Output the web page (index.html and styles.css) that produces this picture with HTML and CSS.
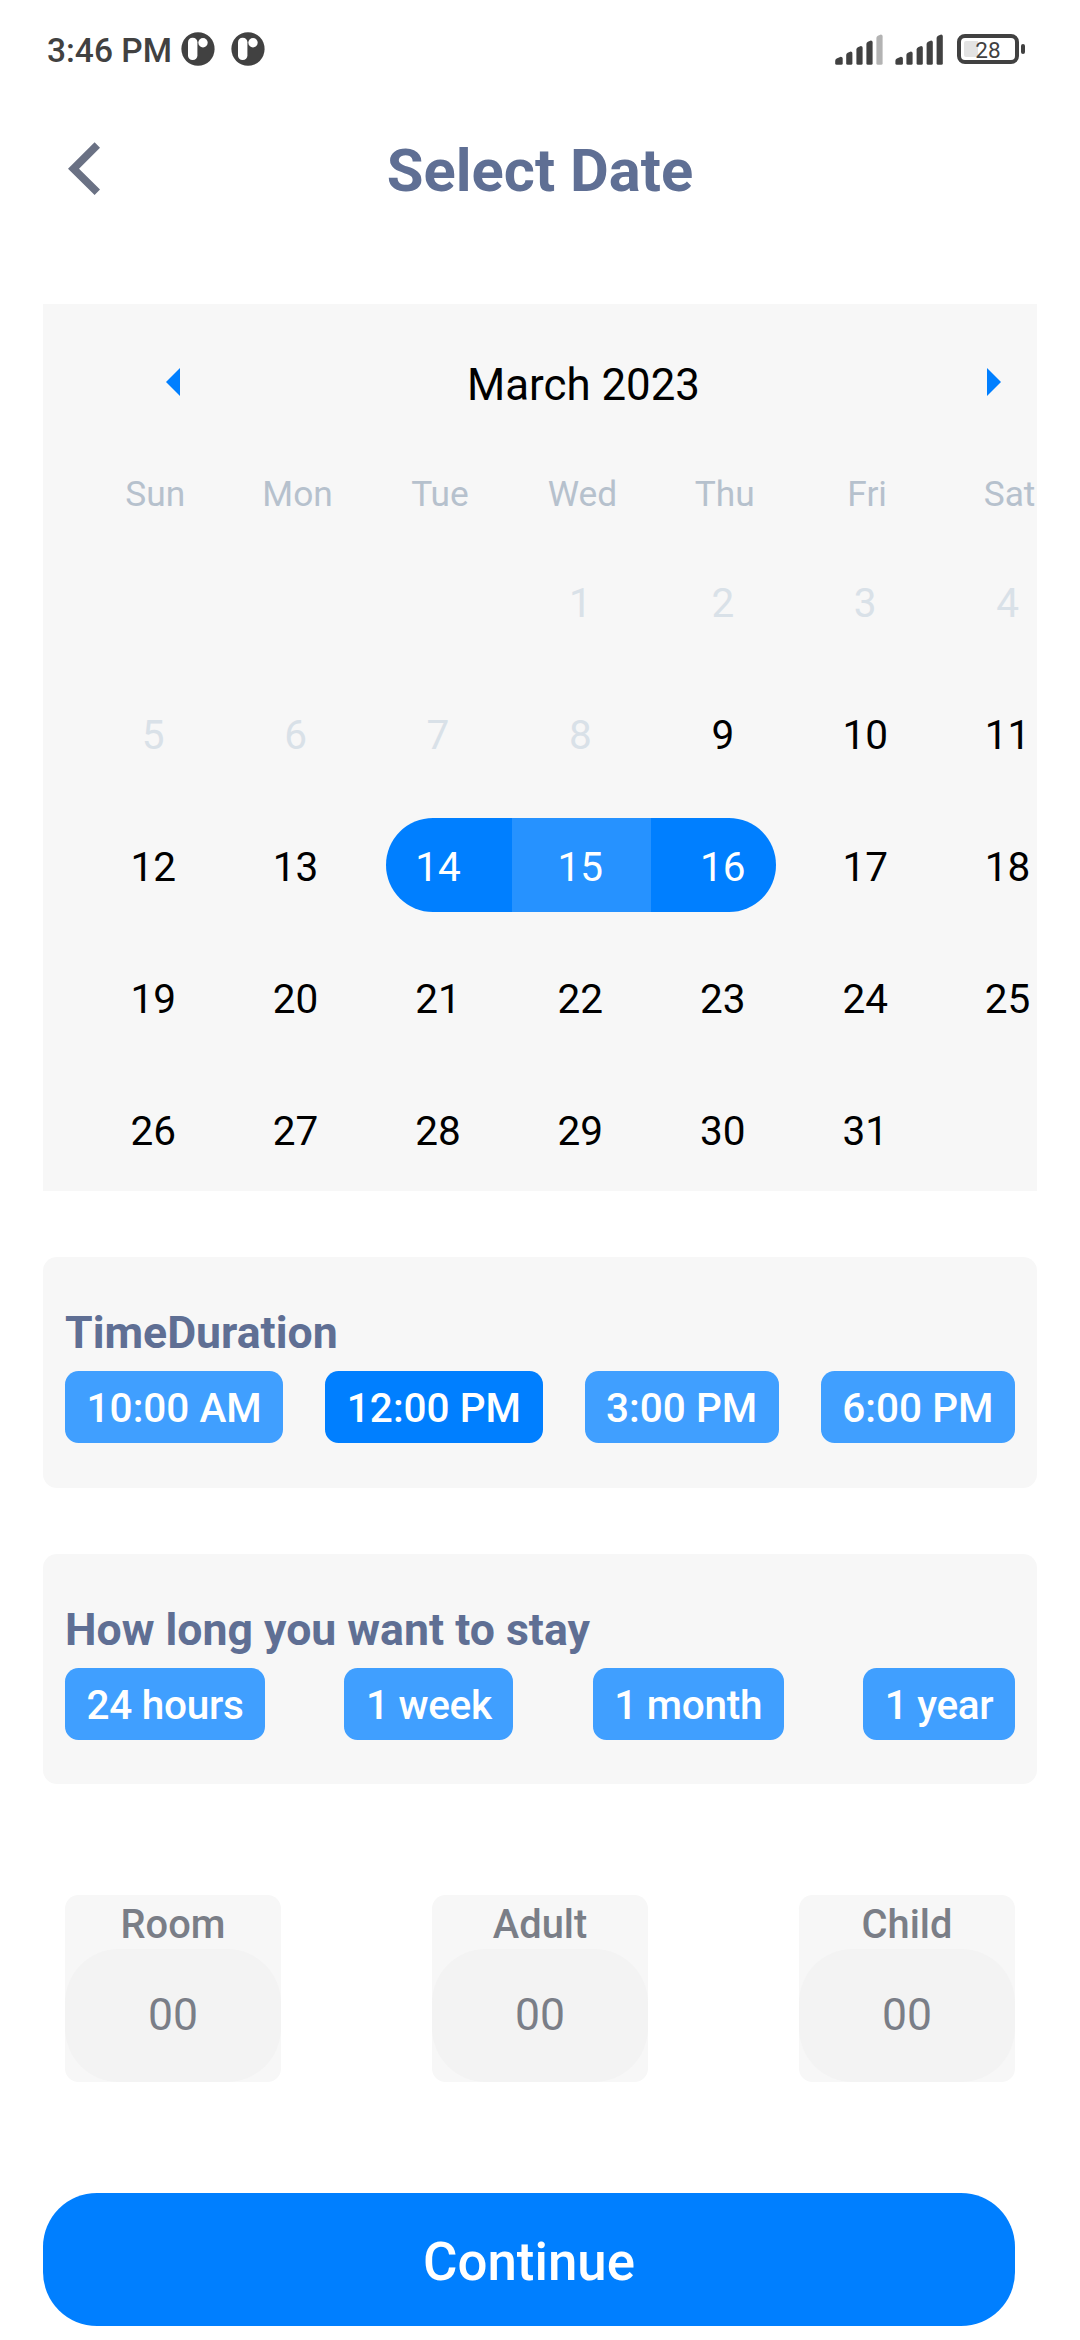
FILE: index.html
```html
<!DOCTYPE html>
<html lang="en">
<head>
<meta charset="utf-8">
<title>Select Date</title>
<link rel="stylesheet" href="styles.css">
</head>
<body>
<div class="status">
  <span class="clock">3:46 PM</span>
  <svg class="notif" viewBox="0 0 34 34"><ellipse cx="17" cy="17" rx="16.6" ry="16.8" fill="#414141"/><rect x="7" y="5.8" width="9.400" height="22.200" rx="4.500" fill="#fff"/><circle cx="22" cy="10.700" r="4.700" fill="#fff"/></svg>
  <svg class="notif" viewBox="0 0 34 34"><ellipse cx="17" cy="17" rx="16.6" ry="16.8" fill="#414141"/><rect x="7" y="5.8" width="9.400" height="22.200" rx="4.500" fill="#fff"/><circle cx="22" cy="10.700" r="4.700" fill="#fff"/></svg>
  <svg class="indicators" viewBox="835 30 192 38" fill="#414141">
    <g id="bars">
      <path d="M835.2 61q0-1.5 1.5-2.400l4-1.800q2 0 2 1.800v4.700q0 1.500-1.500 1.500h-4.500q-1.500 0-1.500-1.500z"/>
      <path d="M846.200 55q0-1.500 1.500-2.300l3-1.200q1.700 0 1.700 1.800v10q0 1.500-1.500 1.500h-3.200q-1.500 0-1.500-1.500z"/>
      <path d="M856.400 49.500q0-1.500 1.500-2.300l3-1.200q1.700 0 1.700 1.800v15.500q0 1.500-1.500 1.500h-3.200q-1.500 0-1.500-1.500z"/>
      <path d="M866.400 44q0-1.500 1.500-2.300l3-1.200q1.700 0 1.700 1.800v21q0 1.500-1.500 1.500h-3.200q-1.500 0-1.500-1.500z"/>
    </g>
    <path fill="#b3b3b3" d="M876.400 38q0-1.500 1.500-2.300l3-1.200q1.700 0 1.700 1.800v27q0 1.500-1.500 1.500h-3.200q-1.500 0-1.500-1.500z"/>
    <use href="#bars" x="60.200"/>
    <path d="M936.600 38q0-1.500 1.500-2.300l3-1.200q1.700 0 1.700 1.800v27q0 1.500-1.500 1.500h-3.200q-1.500 0-1.500-1.500z"/>
    <rect x="959" y="36" width="58" height="26" rx="6" fill="none" stroke="#414141" stroke-width="4"/>
    <path d="M966 41h12v16h-12q-2 0-2-2v-12q0-2 2-2z" fill="#e3e3e3"/>
    <rect x="1021" y="44" width="4" height="10" rx="2"/>
    <text class="charge" x="988" y="58" text-anchor="middle">28</text>
  </svg>
</div>

<header class="header">
  <svg class="back" viewBox="0 0 32 54"><path d="M26.600 0.300 32 5.700 11 26.700 32 47.600 26.600 53 0 26.700z" fill="#6a7184"/></svg>
  <h1 class="title">Select Date</h1>
</header>

<main class="content">
  <section class="calendar">
    <div class="month">
      <svg class="arrow" viewBox="0 0 14 28"><path d="M14 0v28L0 14z" fill="#007fff"/></svg>
      <span>March 2023</span>
      <svg class="arrow" viewBox="0 0 14 28"><path d="M0 0v28l14-14z" fill="#007fff"/></svg>
    </div>
    <div class="weekdays"><span>Sun</span><span>Mon</span><span>Tue</span><span>Wed</span><span>Thu</span><span>Fri</span><span>Sat</span></div>
    <div class="days">
      <span></span><span></span><span></span><span class="past">1</span><span class="past">2</span><span class="past">3</span><span class="past">4</span>
      <span class="past">5</span><span class="past">6</span><span class="past">7</span><span class="past">8</span><span>9</span><span>10</span><span>11</span>
      <span>12</span><span>13</span><span class="sel start">14</span><span class="sel middle">15</span><span class="sel end">16</span><span>17</span><span>18</span>
      <span>19</span><span>20</span><span>21</span><span>22</span><span>23</span><span>24</span><span>25</span>
      <span>26</span><span>27</span><span>28</span><span>29</span><span>30</span><span>31</span>
    </div>
  </section>

  <section class="card time">
    <h2>TimeDuration</h2>
    <div class="chips"><span class="chip">10:00 AM</span><span class="chip active">12:00 PM</span><span class="chip">3:00 PM</span><span class="chip">6:00 PM</span></div>
  </section>

  <section class="card stay">
    <h2>How long you want to stay</h2>
    <div class="chips"><span class="chip">24 hours</span><span class="chip">1 week</span><span class="chip">1 month</span><span class="chip">1 year</span></div>
  </section>

  <section class="guests">
    <div class="guest"><span class="label">Room</span><span class="count">00</span></div>
    <div class="guest"><span class="label">Adult</span><span class="count">00</span></div>
    <div class="guest"><span class="label">Child</span><span class="count">00</span></div>
  </section>

  <button class="continue">Continue</button>
</main>
</body>
</html>
```
FILE: styles.css
```css
* { box-sizing: border-box; }
body { margin: 0; width: 1080px; height: 2340px; overflow: hidden; background: #fff; font-family: Roboto, sans-serif; }
svg { display: block; flex: none; }

.status { display: flex; height: 100px; padding: 0 53px 0 47px; }
.clock { width: 134.300px; margin-top: 30px; font-size: 33.500px; line-height: 41px; font-weight: 500; color: #414141; white-space: nowrap; }
.notif { width: 34px; height: 34px; margin: 32px 16px 0 0; }
.indicators { width: 192px; height: 38px; margin: 30px 0 0 auto; }
.charge { font-size: 22.500px; }

.header { display: grid; grid-template-columns: 100px 1fr 100px; height: 204px; }
.back { width: 32px; height: 54px; margin: 42px 0 0 67.500px; }
.title { margin: 36px 0 0; font-size: 59.700px; line-height: 70px; font-weight: 700; text-align: center; color: #5f6f94; }

.content { padding: 0 43px; }

.calendar { height: 887px; overflow: hidden; background: #f7f7f7; padding-left: 41px; }
.month { display: flex; justify-content: space-between; width: 917px; height: 162px; padding: 64px 0 0 82px; font-size: 43.800px; line-height: 34px; color: #000; }
.arrow { width: 14px; height: 28px; }
.weekdays { display: grid; grid-template-columns: repeat(7, 142.400px); font-size: 35.300px; line-height: 56px; text-align: center; color: #b6c1cd; }
.days { display: grid; grid-template-columns: repeat(7, 142.400px); grid-auto-rows: 132px; margin: 15px 0 0 -2px; font-size: 40.500px; line-height: 132px; text-align: center; color: #000; }
.days span { position: relative; z-index: 0; }
.days .past { color: #d9e1e8; }
.days .sel { color: #fff; }
.sel::before { content: ""; position: absolute; z-index: -1; top: 17px; height: 94px; background: #007fff; }
.start::before { left: 19px; right: -3px; border-radius: 47px 0 0 47px; }
.middle::before { left: 2.600px; right: 0.800px; background: #2692ff; }
.end::before { left: -1px; right: 18px; border-radius: 0 47px 47px 0; }

.card { background: #f7f7f7; border-radius: 14px; padding: 51px 22px 0; }
.time { height: 231px; margin-top: 66px; }
.stay { height: 230px; margin-top: 66px; }
.card h2 { margin: 0; font-size: 44.600px; line-height: 51px; font-weight: 700; color: #5f6f94; }
.chips { display: flex; justify-content: space-between; margin-top: 12px; }
.chip { height: 72px; padding: 0 21.600px; border-radius: 13.500px; background: #409fff; color: #fff; font-size: 40.500px; line-height: 74px; font-weight: 500; }
.chip.active { background: #007fff; }
.stay .chip { letter-spacing: -0.300px; }

.guests { display: flex; justify-content: space-between; margin: 111px 22px 0; }
.guest { width: 216px; height: 187px; border-radius: 13.500px; background: #f7f7f7; text-align: center; color: #7a7e87; }
.label { display: block; height: 54px; font-size: 39.800px; line-height: 59px; font-weight: 500; }
.count { display: block; height: 133px; border-radius: 54px; background: #f3f3f3; font-size: 44.500px; line-height: 133px; }

.continue { display: block; width: 972px; height: 133px; margin-top: 111px; padding: 4px 0 0; border: 0; border-radius: 54px; background: #007fff; color: #fff; font: 500 52.800px Roboto, sans-serif; }
```
